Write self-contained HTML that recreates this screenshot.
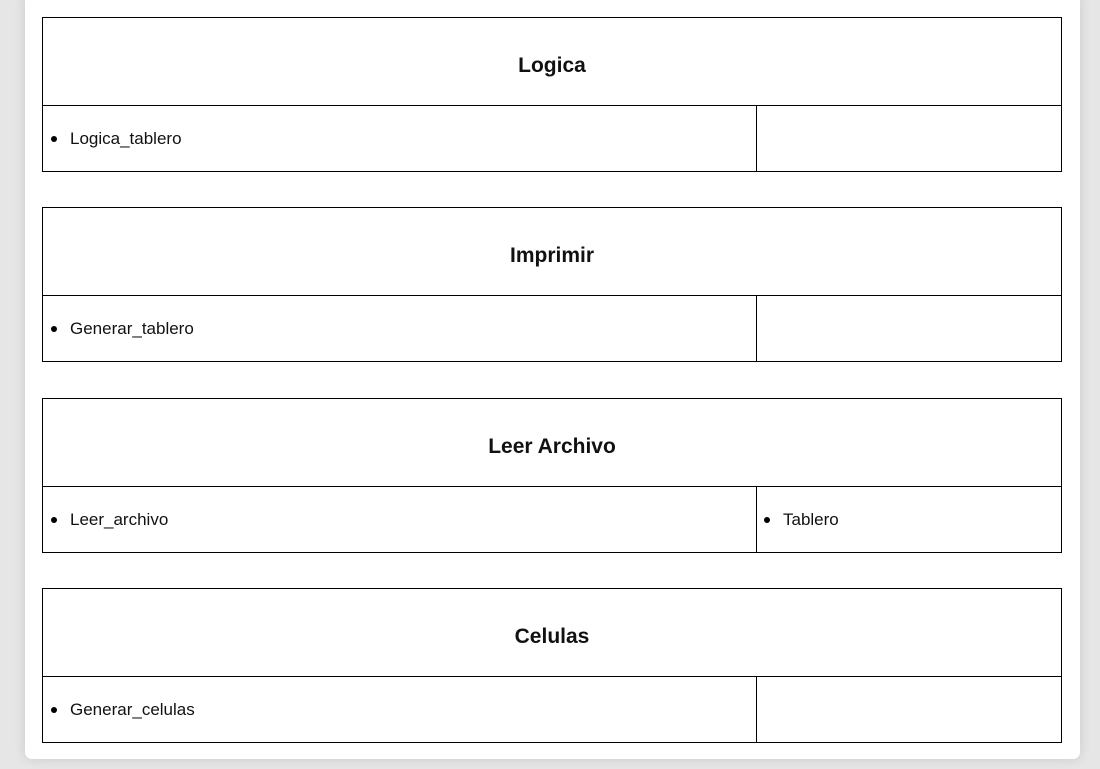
<!DOCTYPE html>
<html><head><meta charset="utf-8"><style>
html,body{margin:0;padding:0;}
body{width:1100px;height:769px;background:#e6e6e6;position:relative;overflow:hidden;font-family:"Liberation Sans","DejaVu Sans",sans-serif;color:#111;}
.card{position:absolute;left:25px;top:-8px;width:1055px;height:767px;background:#fff;border-radius:7px;box-shadow:0 0 12px rgba(0,0,0,0.12);}
.t{position:absolute;left:42px;width:1018px;height:153px;border:1px solid #000;}
.h{position:absolute;left:0;top:0;width:1018px;height:87px;border-bottom:1px solid #000;text-align:center;line-height:96px;font-size:21px;font-weight:bold;}
.l{position:absolute;left:0;top:88px;width:713px;height:65px;border-right:1px solid #000;}
.item{position:absolute;top:0;line-height:65px;font-size:17px;padding-left:27px;}
.item:before{content:"";position:absolute;left:8px;top:30px;width:6px;height:6px;border-radius:50%;background:#000;}
</style></head><body>
<div class="card"></div>
<div class="t" style="top:17px"><div class="h">Logica</div><div class="l"><div class="item" style="left:0">Logica_tablero</div></div></div>
<div class="t" style="top:207px"><div class="h">Imprimir</div><div class="l"><div class="item" style="left:0">Generar_tablero</div></div></div>
<div class="t" style="top:398px"><div class="h">Leer Archivo</div><div class="l"><div class="item" style="left:0">Leer_archivo</div></div><div class="item" style="left:713px;top:88px">Tablero</div></div>
<div class="t" style="top:588px"><div class="h">Celulas</div><div class="l"><div class="item" style="left:0">Generar_celulas</div></div></div>
</body></html>
